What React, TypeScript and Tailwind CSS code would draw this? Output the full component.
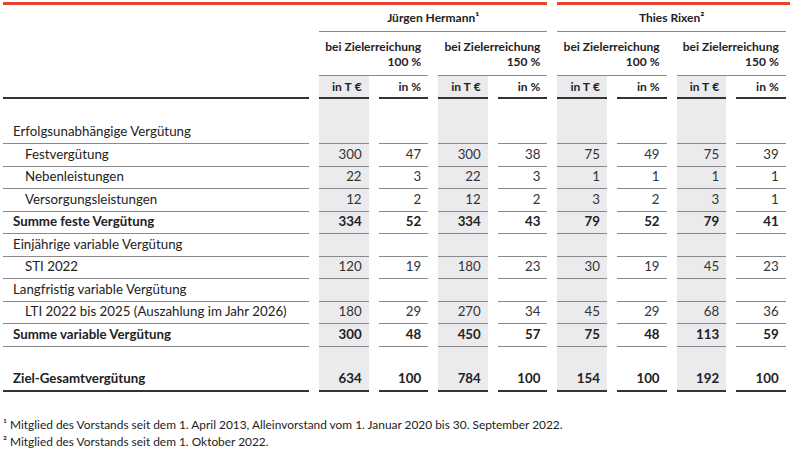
import React from "react";

type Row = {
  label: string;
  level: 0 | 1;
  bold?: boolean;
  values?: string[];
};

const rows: Row[] = [
  { label: "Erfolgsunabhängige Vergütung", level: 0 },
  { label: "Festvergütung", level: 1, values: ["300", "47", "300", "38", "75", "49", "75", "39"] },
  { label: "Nebenleistungen", level: 1, values: ["22", "3", "22", "3", "1", "1", "1", "1"] },
  { label: "Versorgungsleistungen", level: 1, values: ["12", "2", "12", "2", "3", "2", "3", "1"] },
  { label: "Summe feste Vergütung", level: 0, bold: true, values: ["334", "52", "334", "43", "79", "52", "79", "41"] },
  { label: "Einjährige variable Vergütung", level: 0 },
  { label: "STI 2022", level: 1, values: ["120", "19", "180", "23", "30", "19", "45", "23"] },
  { label: "Langfristig variable Vergütung", level: 0 },
  { label: "LTI 2022 bis 2025 (Auszahlung im Jahr 2026)", level: 1, values: ["180", "29", "270", "34", "45", "29", "68", "36"] },
  { label: "Summe variable Vergütung", level: 0, bold: true, values: ["300", "48", "450", "57", "75", "48", "113", "59"] },
];

const total = ["634", "100", "784", "100", "154", "100", "192", "100"];

const shade = (i: number) => (i % 2 === 0 ? "bg-[#ebebed]" : "");

const Spacer = () => (
  <>
    <div className="h-[22.5px]" />
    {Array.from({ length: 8 }).map((_, i) => (
      <div key={i} className={`h-[22.5px] ${shade(i)}`} />
    ))}
  </>
);

export default function App() {
  return (
    <div className="bg-white w-[792px] h-[451px] px-[3px] pt-[2px] text-[#222] font-['Lato','Open_Sans',sans-serif]">
      <div className="grid grid-cols-[306px_repeat(8,49.6px)] gap-x-[10px]">
        {/* red bars */}
        <div className="col-span-5 h-[3px] bg-[#e5432b]" />
        <div className="col-span-4 h-[3px] bg-[#e5432b] -mr-[4px]" />

        {/* names */}
        <div />
        <div className="col-span-4 h-[27px] border-b border-[#8a8a8a] flex items-center justify-center text-[12px] font-bold">
          Jürgen Hermann¹
        </div>
        <div className="col-span-4 h-[27px] border-b border-[#8a8a8a] flex items-center justify-center text-[12px] font-bold">
          Thies Rixen²
        </div>

        {/* target levels */}
        <div />
        {["100\u202F%", "150\u202F%", "100\u202F%", "150\u202F%"].map((p, i) => (
          <div
            key={i}
            className="col-span-2 h-[44px] border-b border-[#8a8a8a] flex flex-col justify-center items-end pr-[7px] text-[12px] font-bold leading-[15px]"
          >
            <span>bei Zielerreichung</span>
            <span>{p}</span>
          </div>
        ))}

        {/* units */}
        <div className="h-[23px] border-b-2 border-[#333]" />
        {Array.from({ length: 8 }).map((_, i) => (
          <div
            key={i}
            className={`h-[23px] border-b-2 border-[#333] flex items-center justify-end pr-[7px] text-[12px] font-bold ${shade(i)}`}
          >
            {i % 2 === 0 ? "in T\u202F€" : "in\u202F%"}
          </div>
        ))}

        <Spacer />

        {rows.map((r, ri) => (
          <React.Fragment key={ri}>
            <div
              className={`h-[22.5px] border-b border-[#8a8a8a] flex items-center text-[13.3px] ${r.level === 1 ? "pl-[22px]" : "pl-[10px]"} ${r.bold ? "font-bold" : ""}`}
            >
              {r.label}
            </div>
            {Array.from({ length: 8 }).map((_, i) => (
              <div
                key={i}
                className={`h-[22.5px] border-b border-[#8a8a8a] flex items-center justify-end pr-[7px] text-[13.3px] ${r.bold ? "font-bold" : "text-[#333]"} ${shade(i)}`}
              >
                {r.values ? r.values[i] : ""}
              </div>
            ))}
          </React.Fragment>
        ))}

        <Spacer />

        <div className="h-[22.5px] border-b-2 border-[#333] flex items-center pl-[10px] text-[13.3px] font-bold">
          Ziel-Gesamtvergütung
        </div>
        {total.map((v, i) => (
          <div
            key={i}
            className={`h-[22.5px] border-b-2 border-[#333] flex items-center justify-end pr-[7px] text-[13.3px] font-bold ${shade(i)}`}
          >
            {v}
          </div>
        ))}
      </div>

      <div className="mt-[24px] text-[11.9px] leading-[17px]">
        <p>¹ Mitglied des Vorstands seit dem 1. April 2013, Alleinvorstand vom 1. Januar 2020 bis 30. September 2022.</p>
        <p>² Mitglied des Vorstands seit dem 1. Oktober 2022.</p>
      </div>
    </div>
  );
}
